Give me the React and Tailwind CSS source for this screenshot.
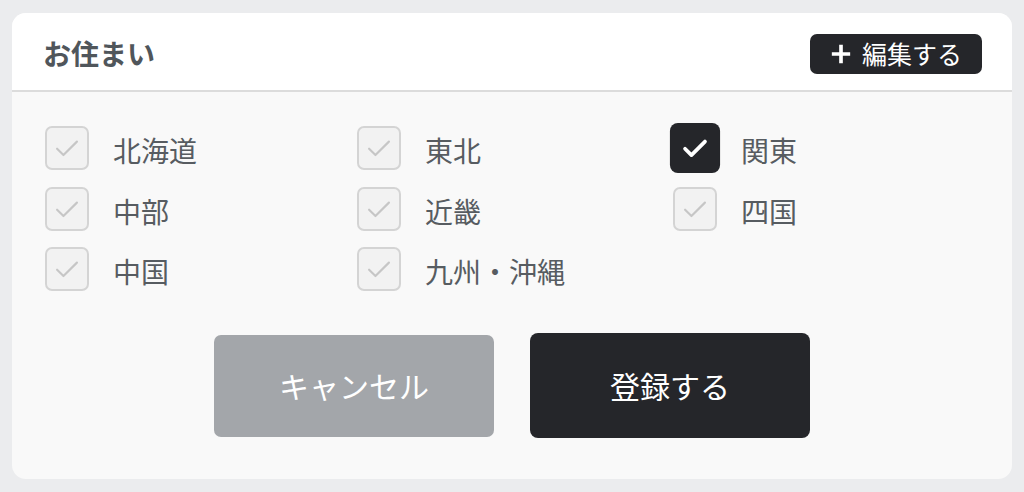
const REGIONS = [
  { name: '北海道', checked: false },
  { name: '東北', checked: false },
  { name: '関東', checked: true },
  { name: '中部', checked: false },
  { name: '近畿', checked: false },
  { name: '四国', checked: false },
  { name: '中国', checked: false },
  { name: '九州・沖縄', checked: false },
]

function CheckIcon({ className }) {
  return (
    <svg viewBox="0 0 24 24" className={className} fill="none" stroke="currentColor" strokeLinecap="round" strokeLinejoin="round">
      <path d="M5 12.5l4.5 4.5L19 7.5" />
    </svg>
  )
}

function RegionCheck({ name, checked }) {
  return (
    <label className="flex items-center gap-6 h-[44px]">
      {checked ? (
        <span className="w-[44px] h-[44px] shrink-0 rounded-[7px] bg-[#25262a] flex items-center justify-center scale-[1.14]">
          <CheckIcon className="w-[30px] h-[30px] text-white stroke-[2.6]" />
        </span>
      ) : (
        <span className="w-[44px] h-[44px] shrink-0 rounded-[7px] bg-[#f2f2f2] border-2 border-[#d4d4d4] flex items-center justify-center">
          <CheckIcon className="w-[34px] h-[34px] text-[#c6c6c6] stroke-[1.5]" />
        </span>
      )}
      <span className="text-[28px] leading-none text-[#575c61] mt-[4px]">{name}</span>
    </label>
  )
}

export default function App() {
  return (
    <div
      className="w-[1024px] h-[492px] bg-[#ebecee] pt-[13px] px-[12px]"
      style={{ fontFamily: '"Noto Sans CJK JP", "Noto Sans", sans-serif' }}
    >
      <div className="h-[466px] rounded-[14px] overflow-hidden bg-[#f9f9f9] flex flex-col">
        {/* Header */}
        <div className="h-[79px] bg-white border-b-2 border-[#dcdcdc] flex items-center justify-between pl-[31px] pr-[30px] pt-[2px] shrink-0">
          <h2 className="text-[28px] font-bold text-[#50565b] leading-none">お住まい</h2>
          <button className="h-[40px] w-[172px] rounded-[7px] bg-[#25262a] text-white flex items-center justify-center gap-[10px] mt-[2px]">
            <svg viewBox="0 0 24 24" className="w-[22px] h-[22px]" fill="none" stroke="currentColor" strokeWidth="4" strokeLinecap="butt">
              <path d="M12 2v20M2 12h20" />
            </svg>
            <span className="text-[25px] leading-none">編集する</span>
          </button>
        </div>

        {/* Body */}
        <div className="flex-1 pt-[34px] pl-[33px]">
          <div className="grid grid-cols-[312px_316px_1fr] gap-y-[16.5px]">
            {REGIONS.map(r => (
              <RegionCheck key={r.name} name={r.name} checked={r.checked} />
            ))}
          </div>

          <div className="flex justify-center items-center gap-[36px] mt-[42px] pr-[33px]">
            <button className="w-[280px] h-[102px] rounded-[7px] bg-[#a3a6aa] text-white text-[30px]">
              キャンセル
            </button>
            <button className="w-[280px] h-[105px] rounded-[8px] bg-[#25262a] text-white text-[30px]">
              登録する
            </button>
          </div>
        </div>
      </div>
    </div>
  )
}
